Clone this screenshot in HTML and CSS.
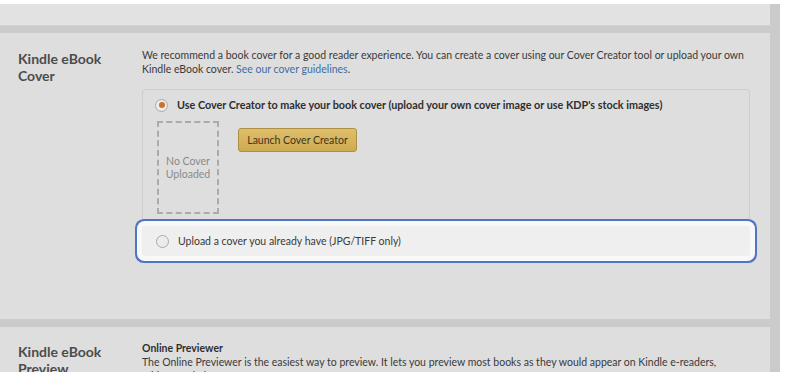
FILE: index.html
```html
<!DOCTYPE html>
<html lang="en">
<head>
	<meta charset="UTF-8">
	<title>Kindle eBook Cover</title>
	<link rel="stylesheet" href="styles.css">
</head>
<body>
<div class="page">
	<div class="panel panel-top"></div>

	<div class="panel section">
		<div class="section-title">Kindle eBook Cover</div>
		<div class="section-body">
			<p class="intro">We recommend a book cover for a good reader experience. You can create a cover using our Cover Creator tool or upload your own Kindle eBook cover. <a href="#">See our cover guidelines</a>.</p>
			<div class="options">
				<div class="option">
					<label class="option-head">
						<span class="radio checked"></span>
						<span class="option-label bold">Use Cover Creator to make your book cover (upload your own cover image or use KDP's stock images)</span>
					</label>
					<div class="creator">
						<div class="no-cover">No Cover<br>Uploaded</div>
						<button class="btn-gold">Launch Cover Creator</button>
					</div>
				</div>
				<div class="option option-focus">
					<label class="option-head">
						<span class="radio"></span>
						<span class="option-label">Upload a cover you already have (JPG/TIFF only)</span>
					</label>
				</div>
			</div>
		</div>
	</div>

	<div class="panel section section-last">
		<div class="section-title">Kindle eBook Preview</div>
		<div class="section-body">
			<div class="sub-title">Online Previewer</div>
			<p class="intro">The Online Previewer is the easiest way to preview. It lets you preview most books as they would appear on Kindle e-readers, tablets, and phones.</p>
		</div>
	</div>
</div>
</body>
</html>
```

FILE: styles.css
```css
*{
	margin: 0;
	padding: 0;
	box-sizing: border-box;
}
body{background:#fff; font-family:"Lato", "Open Sans", sans-serif; color:#3a3a3a;}
.page{width:780px; height:368px; margin-top:4px; padding-right:10px; background:#cbcbcb; overflow:hidden; display:flex; flex-direction:column; gap:7px;}
.panel{background:#dedede; flex:none;}
.panel-top{height:22px; background:#e2e2e2; border-bottom:1px solid #d2d2d2;}
.section{display:flex; padding:15px 0 0 18px; height:286px;}
.section-last{height:auto; flex:1; margin-top:1px; padding-top:15px;}
.section-title{width:124px; flex:none; margin-top:2px; font-size:14px; font-weight:700; line-height:17px; color:#4c4c4c; padding-right:20px;}
.section-last .section-title{margin-top:1px;}
.section-body{width:608px;}
.intro{font-size:10.5px; line-height:14px; color:#3a3a3a;}
.intro a{color:#3f6da3; text-decoration:none;}
.sub-title{font-size:10.5px; font-weight:700; line-height:13px; color:#2e2e2e;}
.options{margin-top:13px; border:1px solid #cdcdcd; border-radius:4px;}
.option-head{display:flex; align-items:center; gap:9px; padding:0 12px;}
.option:first-child .option-head{padding-top:8px;}
.option-label{font-size:10.5px; line-height:14px; color:#3a3a3a;}
.bold{font-size:10.8px; font-weight:700; color:#2e2e2e;}
.radio{width:13px; height:13px; border-radius:50%; border:1px solid #a9a9a9; background:#ececec; flex:none; display:flex; align-items:center; justify-content:center;}
.radio.checked::after{content:""; width:6px; height:6px; border-radius:50%; background:#c9722f;}
.creator{display:flex; align-items:flex-start; gap:19px; padding:9px 0 12px 14px;}
.no-cover{width:62px; height:93px; border:2px dashed #ababab; display:flex; align-items:center; justify-content:center; text-align:center; font-size:10.5px; line-height:13px; color:#8a8a8a;}
.btn-gold{margin-top:7px; height:24px; width:119px; white-space:nowrap; font-family:inherit; font-size:10.5px; color:#3b3422; background:linear-gradient(#dfbf6c, #cfa94f); border:1px solid #ad9043; border-radius:3px;}
.option-focus{background:#efefef; margin:0 -1px -1px; border-radius:3px; box-shadow:0 0 0 5px #f8f8f8, 0 0 0 7px #5274c6; position:relative;}
.option-focus .option-head{height:30px; padding-left:14px;}
```
